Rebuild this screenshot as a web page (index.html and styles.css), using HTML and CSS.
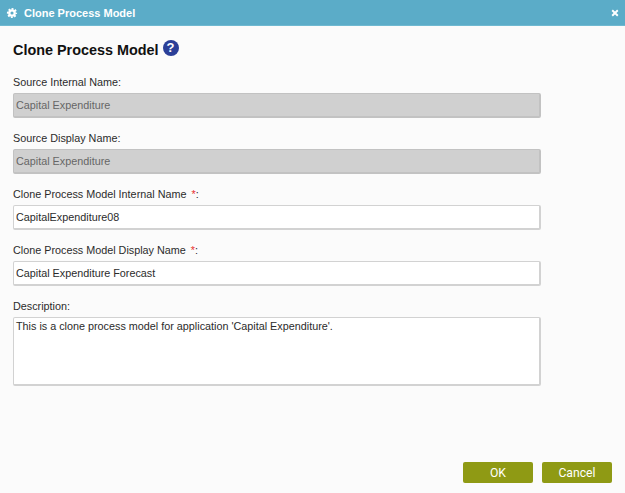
FILE: index.html
```html
<!DOCTYPE html>
<html lang="en">
<head>
<meta charset="utf-8">
<title>Clone Process Model</title>
<link rel="stylesheet" href="styles.css">
</head>
<body>
<div class="dialog">
  <header class="titlebar">
    <svg class="gear" viewBox="0 0 24 24" aria-hidden="true"><g fill="none" stroke="#fff"><circle cx="12" cy="12" r="6.500" stroke-width="5.500"/><circle cx="12" cy="12" r="10" stroke-width="4.500" stroke-dasharray="4.400 3.450" stroke-dashoffset="2.200"/></g></svg>
    <span class="titlebar-text">Clone Process Model</span>
    <svg class="close" viewBox="0 0 10 10" aria-hidden="true"><path d="M1.500 1.500l7 7M8.500 1.500l-7 7" stroke="#fff" stroke-width="2.400" fill="none"/></svg>
  </header>
  <main class="content">
    <h1 class="heading">Clone Process Model <span class="help">?</span></h1>
    <div class="field">
      <label class="label">Source Internal Name:</label>
      <input class="input disabled" value="Capital Expenditure" disabled>
    </div>
    <div class="field">
      <label class="label">Source Display Name:</label>
      <input class="input disabled" value="Capital Expenditure" disabled>
    </div>
    <div class="field">
      <label class="label">Clone Process Model Internal Name <span class="req">*</span>:</label>
      <input class="input" value="CapitalExpenditure08">
    </div>
    <div class="field">
      <label class="label">Clone Process Model Display Name <span class="req">*</span>:</label>
      <input class="input" value="Capital Expenditure Forecast">
    </div>
    <div class="field">
      <label class="label">Description:</label>
      <textarea class="input area">This is a clone process model for application 'Capital Expenditure'.</textarea>
    </div>
  </main>
  <footer class="actions">
    <button class="btn">OK</button>
    <button class="btn">Cancel</button>
  </footer>
</div>
</body>
</html>
```
FILE: styles.css
```css
* { box-sizing: border-box; }
html, body { margin: 0; height: 100%; }
body { font-family: "Liberation Sans", Arial, sans-serif; color: #2b2b2b; background: #fbfbfb; overflow: hidden; }
.dialog { width: 625px; height: 493px; display: flex; flex-direction: column; }
.titlebar { height: 26px; flex: none; background: #5bacc8; border-bottom: 1px solid #6fb9d1; display: flex; align-items: center; padding: 0 6px 0 7px; color: #fff; }
.gear { width: 10px; height: 10px; margin-right: 7px; overflow: visible; }
.titlebar-text { flex: 1; font-size: 11px; font-weight: bold; }
.close { width: 8px; height: 8px; }
.content { flex: 1; padding: 14px 84px 0 13px; }
.heading { margin: 0 0 15px; height: 20px; font-size: 14.400px; font-weight: bold; color: #111; display: flex; align-items: center; gap: 4px; line-height: 20px; }
.help { width: 16px; height: 16px; border-radius: 50%; background: #2b3f98; color: #fff; font-size: 13px; line-height: 16px; text-align: center; margin: -4px 0 0 0; }
.field { display: flex; flex-direction: column; margin-bottom: 13px; }
.label { font-size: 10.800px; line-height: 14px; height: 14px; margin-bottom: 4px; color: #2b2b2b; }
.req { color: #e83030; margin-left: 2px; }
.input { width: 528px; height: 25px; border: 1px solid #d2d2d2; border-bottom-width: 2px; border-right-width: 2px; border-radius: 2px; background: #fff; padding: 0 2px; font: 10.800px "Liberation Sans", Arial, sans-serif; color: #2b2b2b; outline: none; }
.disabled { background: #d0d0d0; border-color: #c2c2c2; color: #666; -webkit-text-fill-color: #666; opacity: 1; }
.area { height: 69px; padding: 2px; resize: none; display: block; }
.actions { flex: none; display: flex; justify-content: flex-end; gap: 9px; padding: 0 13px 10px 0; }
.btn { width: 70px; height: 21px; border: 0; border-radius: 2px; background: #8f9a14; color: #fff; font: 12.200px Roboto, "Liberation Sans", sans-serif; padding: 0; }
```
